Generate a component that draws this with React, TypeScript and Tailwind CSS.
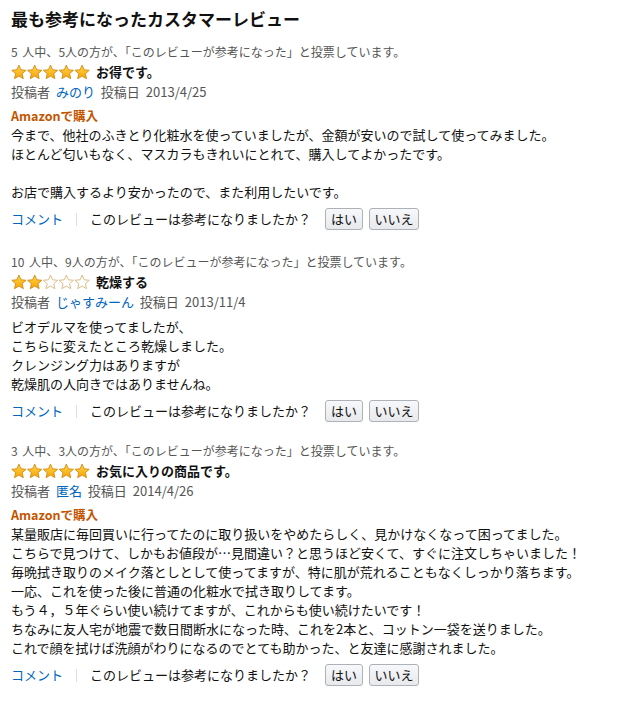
import React from "react";

const STAR =
  "M8 1 L10.06 5.77 L15.23 6.25 L11.33 9.68 L12.47 14.75 L8 12.1 L3.53 14.75 L4.67 9.68 L0.77 6.25 L5.94 5.77 Z";

function Stars({ n }: { n: number }) {
  return (
    <svg width="79" height="16" viewBox="0 0 80 16" className="shrink-0">
      <defs>
        <linearGradient id="sg" x1="0" y1="0" x2="0" y2="1">
          <stop offset="0" stopColor="#ffd84d" />
          <stop offset="1" stopColor="#f6a300" />
        </linearGradient>
      </defs>
      {[0, 1, 2, 3, 4].map((i) => (
        <path
          key={i}
          d={STAR}
          transform={`translate(${i * 16} 0)`}
          fill={i < n ? "url(#sg)" : "#ffffff"}
          stroke={i < n ? "#d28a12" : "#d6b47a"}
          strokeWidth="0.9"
          strokeLinejoin="round"
        />
      ))}
    </svg>
  );
}

function Btn({ label, w }: { label: string; w: string }) {
  return (
    <button
      className={`${w} h-[22px] rounded-[3px] border border-[#adb1b8] bg-gradient-to-b from-[#f7f8fa] to-[#e7e9ec] text-[13px] leading-[20px] text-[#111] text-center`}
    >
      {label}
    </button>
  );
}

type Review = {
  total: string;
  helpful: string;
  stars: number;
  title: string;
  author: string;
  date: string;
  amazon: boolean;
  body: string[];
  mt: string;
};

const reviews: Review[] = [
  {
    total: "5",
    helpful: "5",
    stars: 5,
    title: "お得です。",
    author: "みのり",
    date: "2013/4/25",
    amazon: true,
    body: [
      "今まで、他社のふきとり化粧水を使っていましたが、金額が安いので試して使ってみました。",
      "ほとんど匂いもなく、マスカラもきれいにとれて、購入してよかったです。",
      "",
      "お店で購入するより安かったので、また利用したいです。",
    ],
    mt: "mt-[12px]",
  },
  {
    total: "10",
    helpful: "9",
    stars: 2,
    title: "乾燥する",
    author: "じゃすみーん",
    date: "2013/11/4",
    amazon: false,
    body: [
      "ビオデルマを使ってましたが、",
      "こちらに変えたところ乾燥しました。",
      "クレンジング力はありますが",
      "乾燥肌の人向きではありませんね。",
    ],
    mt: "mt-[22px]",
  },
  {
    total: "3",
    helpful: "3",
    stars: 5,
    title: "お気に入りの商品です。",
    author: "匿名",
    date: "2014/4/26",
    amazon: true,
    body: [
      "某量販店に毎回買いに行ってたのに取り扱いをやめたらしく、見かけなくなって困ってました。",
      "こちらで見つけて、しかもお値段が…見間違い？と思うほど安くて、すぐに注文しちゃいました！",
      "毎晩拭き取りのメイク落としとして使ってますが、特に肌が荒れることもなくしっかり落ちます。",
      "一応、これを使った後に普通の化粧水で拭き取りしてます。",
      "もう４，５年ぐらい使い続けてますが、これからも使い続けたいです！",
      "ちなみに友人宅が地震で数日間断水になった時、これを2本と、コットン一袋を送りました。",
      "これで顔を拭けば洗顔がわりになるのでとても助かった、と友達に感謝されました。",
    ],
    mt: "mt-[19px]",
  },
];

export default function App() {
  return (
    <div className="w-[620px] min-h-[708px] bg-white px-[11px] pt-[8px] font-['Noto_Sans_CJK_JP','Noto_Sans',sans-serif] text-[#111]">
      <h1 className="text-[17px] font-bold leading-[22px] text-[#111]">
        最も参考になったカスタマーレビュー
      </h1>
      {reviews.map((r, idx) => (
        <div key={idx} className={r.mt}>
          <div className="text-[12px] leading-[19px] text-[#555] [word-spacing:2px]">
            {r.total} 人中、{r.helpful}人の方が、「このレビューが参考になった」と投票しています。
          </div>
          <div className="flex items-center h-[21px] gap-[6px]">
            <Stars n={r.stars} />
            <span className="text-[13px] font-bold leading-[20px] text-[#111]">{r.title}</span>
          </div>
          <div className="text-[13px] leading-[20px] text-[#555] [word-spacing:3px]">
            投稿者 <span className="text-[#0066c0]">{r.author}</span> 投稿日 {r.date}
          </div>
          {r.amazon && (
            <div className="mt-[4px] text-[12.5px] font-bold leading-[19px] text-[#c45500]">
              Amazonで購入
            </div>
          )}
          <div className={`${r.amazon ? "" : "mt-[5px]"} text-[13px] leading-[19px] text-[#111]`}>
            {r.body.map((line, i) => (
              <div key={i} className="h-[19px]">
                {line}
              </div>
            ))}
          </div>
          <div className="mt-[7px] flex items-center h-[22px] text-[13px]">
            <span className="text-[#0066c0]">コメント</span>
            <span className="mx-[13px] h-[13px] w-px bg-[#ddd]" />
            <span className="text-[#111]">このレビューは参考になりましたか？</span>
            <div className="ml-[14px] flex gap-[6px]">
              <Btn label="はい" w="w-[38px]" />
              <Btn label="いいえ" w="w-[50px]" />
            </div>
          </div>
        </div>
      ))}
    </div>
  );
}
